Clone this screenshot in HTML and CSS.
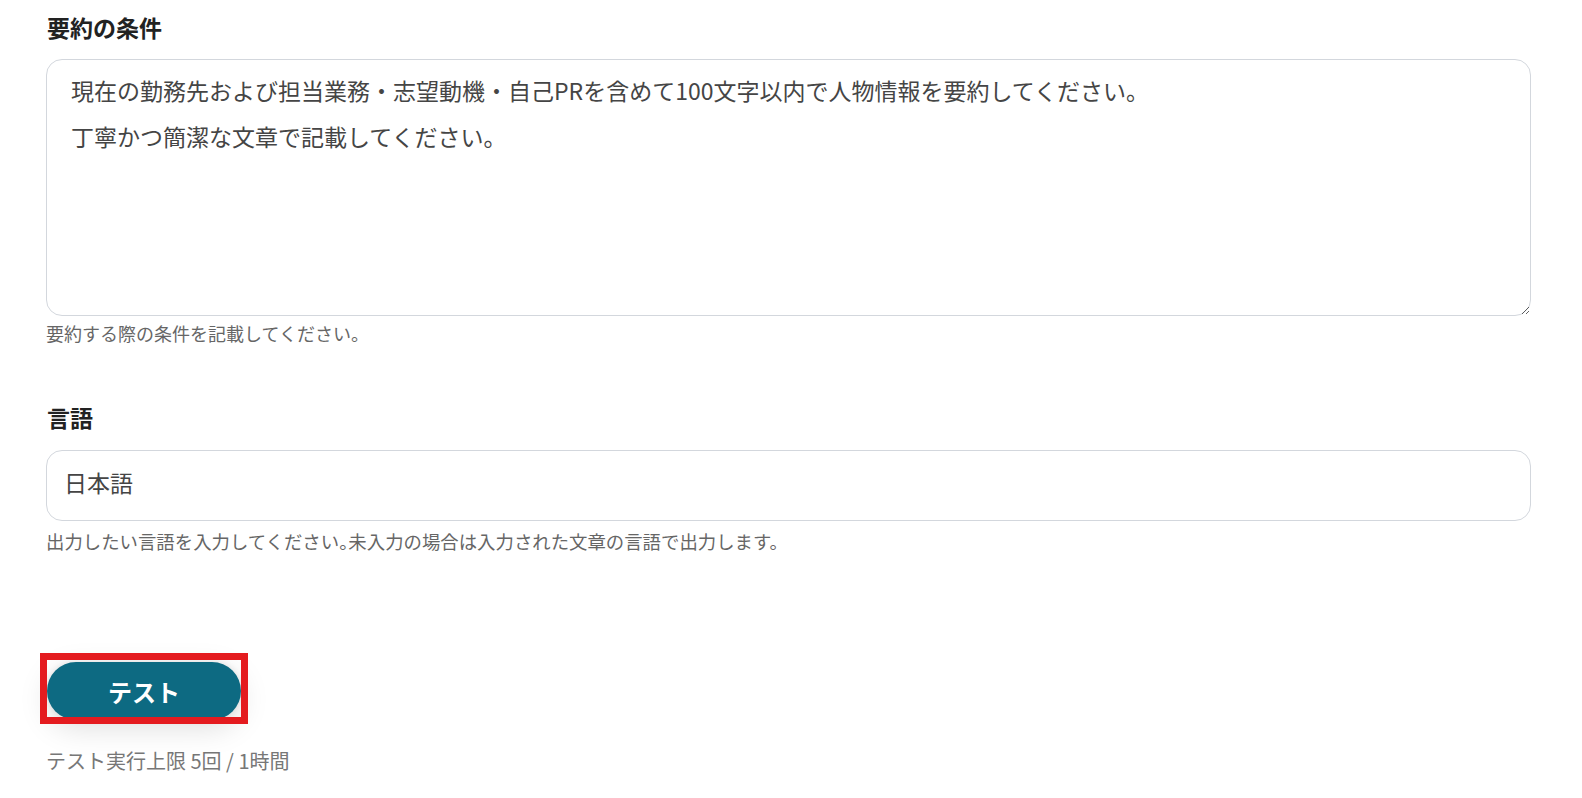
FILE: index.html
```html
<!DOCTYPE html>
<html lang="ja">
<head>
<meta charset="utf-8">
<title>テスト</title>
<link rel="stylesheet" href="styles.css">
</head>
<body>
<main class="page">
  <section class="field">
    <label class="label" for="cond">要約の条件</label>
    <textarea id="cond" class="textarea">現在の勤務先および担当業務・志望動機・自己PRを含めて100文字以内で人物情報を要約してください。
丁寧かつ簡潔な文章で記載してください。</textarea>
    <p class="help help-first">要約する際の条件を記載してください。</p>
  </section>
  <section class="field field-lang">
    <label class="label" for="lang">言語</label>
    <input id="lang" class="input" type="text" value="日本語">
    <p class="help help-second">出力したい言語を入力してください<span class="half">。</span>未入力の場合は入力された文章の言語で出力します。</p>
  </section>
  <div class="actions">
    <div class="btn-wrap">
      <button class="btn" type="button">テスト</button>
      <span class="highlight"></span>
    </div>
    <p class="limit">テスト実行上限 5回 / 1時間</p>
  </div>
</main>
</body>
</html>
```
FILE: styles.css
```css
* { box-sizing: border-box; }
html, body { margin: 0; padding: 0; background: #ffffff; }
body {
  font-family: "Noto Sans CJK JP", "Noto Sans", sans-serif;
  color: #333;
}
.page {
  padding: 13px 51px 0 46px;
  display: flex;
  flex-direction: column;
}
.field {
  display: flex;
  flex-direction: column;
}
.label {
  font-size: 23px;
  line-height: 28px;
  font-weight: 700;
  color: #222;
  margin-bottom: 18px;
  padding-left: 1px;
}
.field-lang { margin-top: 58px; }
.field-lang .label { margin-bottom: 19px; }
.textarea {
  width: 100%;
  height: 257px;
  border: 1px solid #d3d7dd;
  border-radius: 16px;
  padding: 7px 24px;
  font-family: inherit;
  font-size: 23px;
  line-height: 46px;
  color: #454545;
  background: #fff;
  resize: vertical;
  outline: none;
}
.input {
  width: 100%;
  height: 71px;
  border: 1px solid #d3d7dd;
  border-radius: 16px;
  padding: 0 17px 8px;
  font-family: inherit;
  font-size: 23px;
  color: #454545;
  background: #fff;
  outline: none;
}
.help {
  margin: 0;
  font-size: 18px;
  line-height: 24px;
  color: #666;
}
.help-first { margin-top: 5px; }
.help-second { margin-top: 8px; font-size: 18.4px; }
.half { font-feature-settings: "halt"; }
.actions {
  margin-top: 109px;
  display: flex;
  flex-direction: column;
  align-items: flex-start;
}
.btn-wrap {
  position: relative;
  margin-left: 1px;
}
.btn {
  display: block;
  width: 194px;
  height: 58px;
  border: none;
  border-radius: 29px;
  background: #0d6a82;
  color: #fff;
  font-family: inherit;
  font-size: 24px;
  font-weight: 700;
  box-shadow: 0 0 6px rgba(0, 0, 0, 0.10), 0 8px 30px rgba(0, 0, 0, 0.13);
  cursor: pointer;
}
.highlight {
  position: absolute;
  left: -7px;
  top: -9px;
  width: 208px;
  height: 71px;
  border: 7px solid #e41b1f;
  pointer-events: none;
}
.limit {
  margin: 27px 0 0;
  font-size: 20px;
  line-height: 28px;
  color: #777;
}
```
